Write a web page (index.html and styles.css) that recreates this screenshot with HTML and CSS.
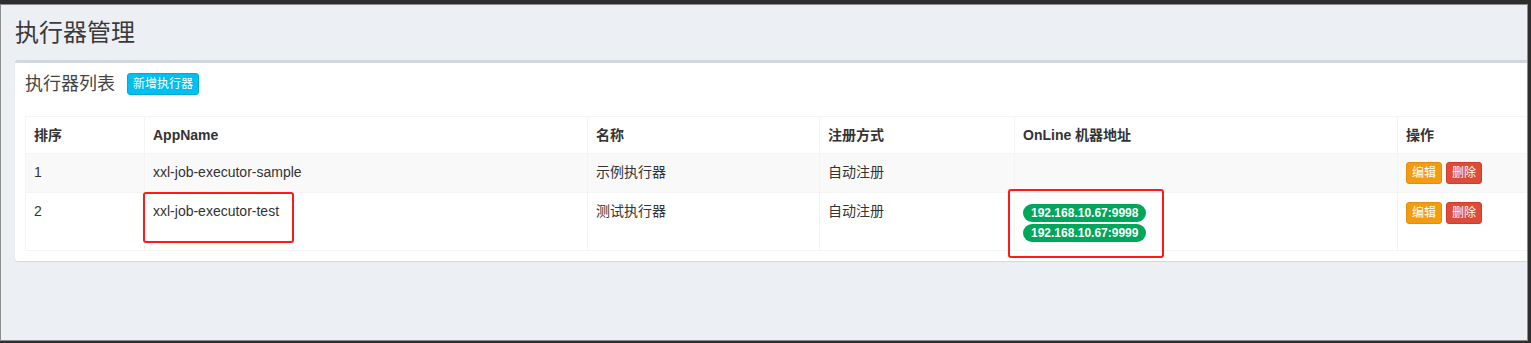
FILE: index.html
```html
<!DOCTYPE html>
<html lang="zh-CN">
<head>
    <meta charset="UTF-8">
    <title>执行器管理</title>
    <link rel="stylesheet" href="styles.css">
</head>
<body>

<div class="window">
    <div class="page">
        <h1 class="page-title">执行器管理</h1>

        <div class="box">
            <div class="box-header">
                <h3>执行器列表</h3>
                <button class="btn btn-info">新增执行器</button>
            </div>
            <div class="box-body">
                <table class="list">
                    <colgroup>
                        <col class="w-sort">
                        <col class="w-app">
                        <col class="w-title">
                        <col class="w-type">
                        <col class="w-addr">
                        <col>
                    </colgroup>
                    <thead>
                    <tr>
                        <th>排序</th>
                        <th>AppName</th>
                        <th>名称</th>
                        <th>注册方式</th>
                        <th>OnLine 机器地址</th>
                        <th>操作</th>
                    </tr>
                    </thead>
                    <tbody>
                    <tr class="odd">
                        <td>1</td>
                        <td>xxl-job-executor-sample</td>
                        <td>示例执行器</td>
                        <td>自动注册</td>
                        <td></td>
                        <td><button class="btn btn-warn">编辑</button> <button class="btn btn-danger">删除</button></td>
                    </tr>
                    <tr>
                        <td>2</td>
                        <td>xxl-job-executor-test</td>
                        <td>测试执行器</td>
                        <td>自动注册</td>
                        <td><span class="badge">192.168.10.67:9998</span><br><span class="badge">192.168.10.67:9999</span></td>
                        <td><button class="btn btn-warn">编辑</button> <button class="btn btn-danger">删除</button></td>
                    </tr>
                    </tbody>
                </table>
            </div>
        </div>

        <!-- 标注框 -->
        <div class="mark mark-name"></div>
        <div class="mark mark-addr"></div>
    </div>
</div>

</body>
</html>
```

FILE: styles.css
```css
body{
    margin:0;
    background:#2e2e2e;
    font-family:"Liberation Sans","Noto Sans CJK SC",sans-serif;
    font-size:14px;
    color:#333;
}
.window{
    margin-top:4px;
    width:1526px;
    height:335px;
    border:1px solid #8c8c8c;
    background:#ecf0f5;
    overflow:hidden;
}
.page{
    position:relative;
    width:1560px;
    padding:0 14px;
}
.page-title{
    margin:0;
    padding-top:15px;
    font-size:24px;
    font-weight:normal;
    line-height:26px;
    height:40px;
    color:#3a3a3a;
}
.box{
    background:#fff;
    border-top:3px solid #d2d6de;
    border-radius:3px;
    box-shadow:0 1px 1px rgba(0,0,0,0.1);
}
.box-header{
    display:flex;
    align-items:center;
    padding:10px 10px 11px;
    height:22px;
}
.box-header h3{
    margin:0;
    font-size:18px;
    font-weight:normal;
    line-height:1;
    color:#444;
}
.box-body{
    padding:10px;
}
.btn{
    font-family:inherit;
    font-size:12px;
    line-height:18px;
    padding:1px 5px;
    border:1px solid;
    border-radius:3px;
    color:#fff;
    vertical-align:middle;
}
.btn-info{
    margin-left:12px;
    background:#00c0ef;
    border-color:#00acd6;
}
.btn-warn{
    background:#f39c12;
    border-color:#e08e0b;
}
.btn-danger{
    background:#dd4b39;
    border-color:#d73925;
}
.list{
    width:1522px;
    table-layout:fixed;
    border-collapse:collapse;
}
.w-sort{ width:119px; }
.w-app{ width:443px; }
.w-title{ width:232px; }
.w-type{ width:195px; }
.w-addr{ width:383px; }
.list th,
.list td{
    border:1px solid #f4f4f4;
    padding:8px;
    line-height:20px;
    text-align:left;
    vertical-align:top;
}
.list th{
    font-weight:bold;
}
.list tr.odd td{
    background:#f9f9f9;
}
.badge{
    display:inline-block;
    padding:3px 8px;
    font-size:12px;
    font-weight:bold;
    line-height:1;
    color:#fff;
    background:#00a65a;
    border-radius:10px;
    vertical-align:middle;
}
.mark{
    position:absolute;
    border:2px solid #ff1a1a;
    border-radius:3px;
    box-sizing:border-box;
}
.mark-name{
    left:142px;
    top:187px;
    width:151px;
    height:51px;
}
.mark-addr{
    left:1007px;
    top:184px;
    width:156px;
    height:69px;
}
```
